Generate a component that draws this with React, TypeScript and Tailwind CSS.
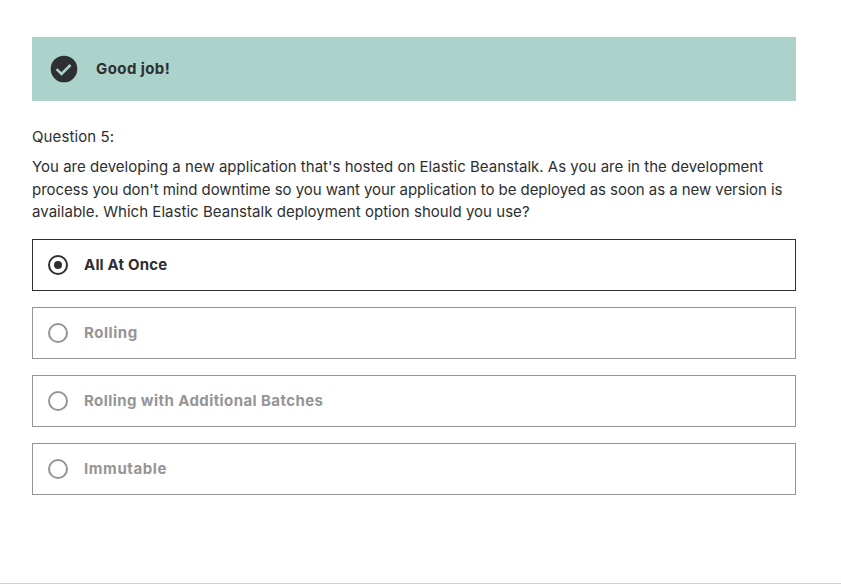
import React from "react";

type Option = { label: string; tracking: string; selected?: boolean };

const options: Option[] = [
  { label: "All At Once", tracking: "tracking-[0.18px]", selected: true },
  { label: "Rolling", tracking: "tracking-[0.55px]" },
  { label: "Rolling with Additional Batches", tracking: "tracking-[0.42px]" },
  { label: "Immutable", tracking: "tracking-[0.6px]" },
];

export default function App() {
  return (
    <main className="flex h-[584px] w-[841px] flex-col whitespace-nowrap border-b border-[#d1d2d3] bg-white pl-8 pr-[45px] pt-[37px] font-['Inter',sans-serif] text-[15px] leading-[22.4px] text-[#2d2f31]">
      <div className="flex h-16 items-center bg-[#acd2cc] pl-[18px] font-bold">
        <svg width="28" height="28" viewBox="0 0 28 28">
          <circle cx="14" cy="14" r="13.3" fill="#2d2f31" />
          <path d="M6.6 14.1l4.9 4.8 9-8.9" fill="none" stroke="#acd2cc" strokeWidth="2.5" />
        </svg>
        <span className="ml-[18px] tracking-[0.42px]">Good job!</span>
      </div>
      <p className="mt-[25px] tracking-[0.1px]">Question 5:</p>
      <div className="mt-[7.8px]">
        <p className="tracking-[0.012px]">You are developing a new application that's hosted on Elastic Beanstalk. As you are in the development</p>
        <p className="tracking-[-0.058px]">process you don't mind downtime so you want your application to be deployed as soon as a new version is</p>
        <p className="tracking-[0.037px]">available. Which Elastic Beanstalk deployment option should you use?</p>
      </div>
      <div className="mt-[15.6px] flex flex-col gap-4">
        {options.map((o) => (
          <label key={o.label} className={`flex h-[52px] items-center border pl-[15px] font-bold ${o.selected ? "border-[#2d2f31]" : "border-[#959596] text-[#959596]"}`}>
            <svg width="20" height="20" viewBox="0 0 20 20">
              <circle cx="10" cy="10" r="9" fill="none" stroke="currentColor" strokeWidth="2" />
              {o.selected && <circle cx="10" cy="10" r="4" fill="currentColor" />}
            </svg>
            <span className={`ml-4 ${o.tracking}`}>{o.label}</span>
          </label>
        ))}
      </div>
    </main>
  );
}
